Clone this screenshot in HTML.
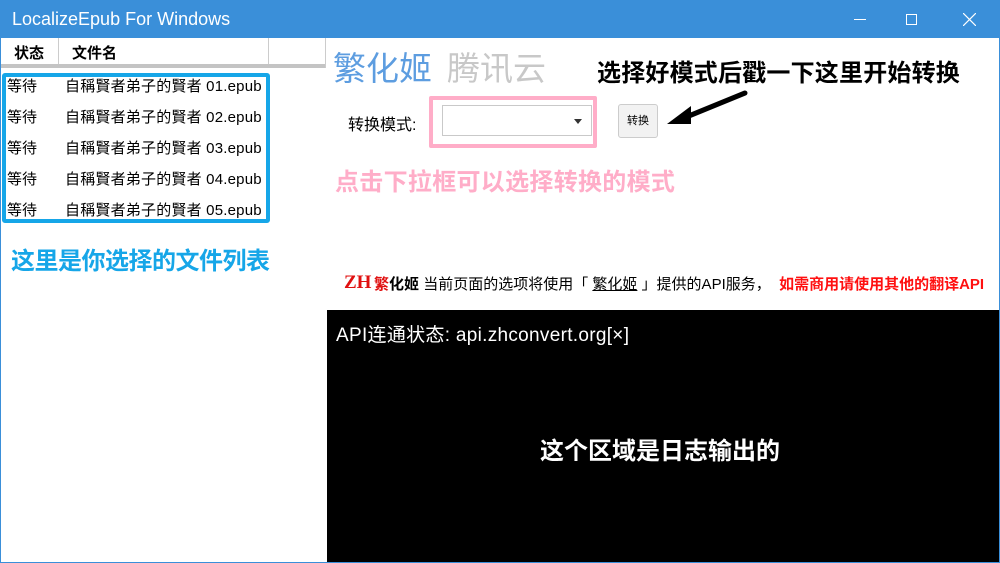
<!DOCTYPE html>
<html><head><meta charset="utf-8"><style>
*{margin:0;padding:0;box-sizing:border-box}
body{width:1000px;height:563px;overflow:hidden;background:#3a8fd9;font-family:"Liberation Sans","Noto Sans CJK SC",sans-serif;position:relative}
.a{position:absolute}
#main{left:1px;top:38px;width:998px;height:524px;background:#fff}
.t{white-space:nowrap}
</style></head><body>
<div class="a t" style="left:12px;top:9px;color:#fff;font-size:18px">LocalizeEpub For Windows</div>
<div class="a" style="left:854px;top:19px;width:12px;height:1px;background:#fff"></div>
<div class="a" style="left:906px;top:14px;width:11px;height:11px;border:1px solid #fff"></div>
<svg class="a" style="left:963px;top:13px" width="13" height="13"><path d="M0 0L13 13M13 0L0 13" stroke="#fff" stroke-width="1.2"/></svg>
<div id="main" class="a">
<div class="a" style="left:0;top:0;width:324px;height:30px;border-bottom:4px solid #c4c4c4"></div>
<div class="a" style="left:57px;top:0;width:1px;height:26px;background:#ccc"></div>
<div class="a" style="left:267px;top:0;width:1px;height:26px;background:#ccc"></div>
<div class="a" style="left:324px;top:0;width:1px;height:30px;background:#ccc"></div>
<div class="a t" style="left:13px;top:4px;font-size:15px;font-weight:bold">状态</div>
<div class="a t" style="left:71px;top:4px;font-size:15px;font-weight:bold">文件名</div>
<div class="a" style="left:1px;top:35px;width:268px;height:150px;border:4px solid #16a6e8;border-radius:3px"></div>
<div class="a t" style="left:6px;top:33px;font-size:15px;line-height:31px">等待<br>等待<br>等待<br>等待<br>等待</div>
<div class="a t" style="left:64px;top:33px;font-size:15px;line-height:31px;letter-spacing:0.2px">自稱賢者弟子的賢者 01.epub<br>自稱賢者弟子的賢者 02.epub<br>自稱賢者弟子的賢者 03.epub<br>自稱賢者弟子的賢者 04.epub<br>自稱賢者弟子的賢者 05.epub</div>
<div class="a t" style="left:10px;top:203px;font-size:24px;font-weight:bold;color:#16a6e8;letter-spacing:-0.5px">这里是你选择的文件列表</div>
<div class="a t" style="left:332px;top:4px;font-size:33px;color:#5d9de0">繁化姬</div>
<div class="a t" style="left:446px;top:4px;font-size:33px;color:#c8c8c8">腾讯云</div>
<div class="a t" style="left:596px;top:15px;font-size:24px;font-weight:bold;letter-spacing:0.2px">选择好模式后戳一下这里开始转换</div>
<div class="a t" style="left:347px;top:73px;font-size:16px">转换模式:</div>
<div class="a" style="left:428px;top:58px;width:168px;height:52px;border:4px solid #ffadc8;border-radius:2px"></div>
<div class="a" style="left:441px;top:67px;width:150px;height:31px;border:1px solid #c9c9c9;background:#fff"></div>
<div class="a" style="left:573px;top:81px;width:0;height:0;border-left:4px solid transparent;border-right:4px solid transparent;border-top:5px solid #333"></div>
<div class="a t" style="left:617px;top:66px;width:40px;height:34px;border:1px solid #ccc;border-radius:3px;background:#f2f2f2;font-size:11px;text-align:center;line-height:32px">转换</div>
<svg class="a" style="left:664px;top:50px" width="85" height="40"><path d="M80 5L14 32" stroke="#000" stroke-width="5" stroke-linecap="round"/><path d="M2 36L26 18L26 36Z" fill="#000"/></svg>
<div class="a t" style="left:334px;top:124px;font-size:24px;font-weight:bold;color:#ffadc8;letter-spacing:0.3px">点击下拉框可以选择转换的模式</div>
<div class="a t" style="left:343px;top:234px;font-size:19px;font-weight:bold;color:#e01010;font-family:'Liberation Serif','Noto Serif CJK SC',serif">ZH</div>
<div class="a t" style="left:373px;top:235px;font-size:15px"><b style="color:#e01010">繁</b><b>化姬</b> 当前页面的选项将使用「 <u>繁化姬</u> 」提供的API服务，&nbsp;&nbsp;<b style="color:#ff1010">如需商用请使用其他的翻译API</b></div>
<div class="a" style="left:326px;top:272px;width:672px;height:252px;background:#000"></div>
<div class="a t" style="left:335px;top:282px;font-size:19px;color:#fff;letter-spacing:0.3px">API连通状态: api.zhconvert.org[×]</div>
<div class="a t" style="left:539px;top:393px;font-size:24px;font-weight:bold;color:#fff">这个区域是日志输出的</div>
</div>
</body></html>
